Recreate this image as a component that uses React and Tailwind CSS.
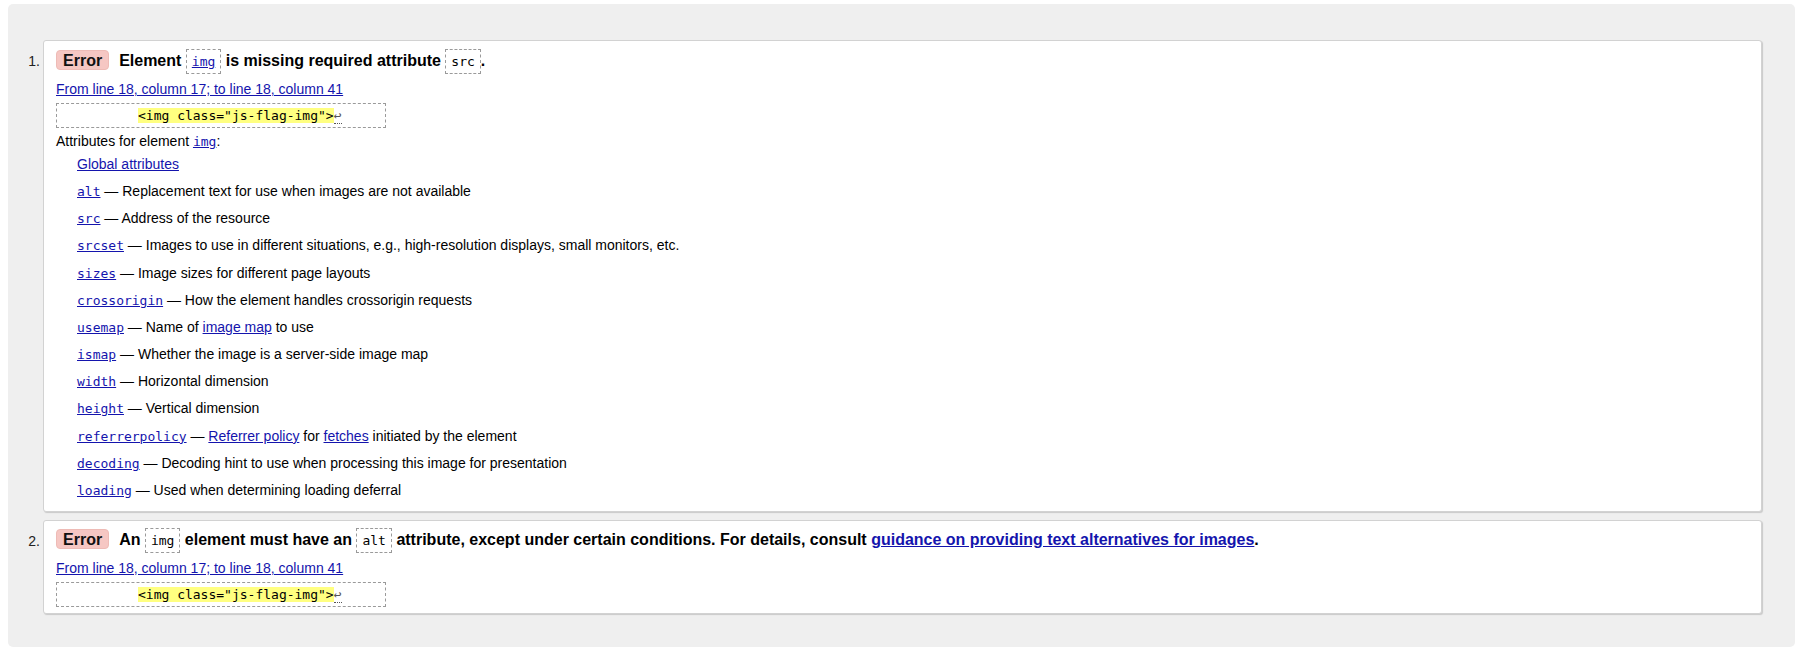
const sans = "font-['Liberation_Sans',Arial,sans-serif]";
const mono = "font-['DejaVu_Sans_Mono',Consolas,monospace] text-[13px]";
const link = "text-[#1414ad] underline";

function Badge() {
  return (
    <span className="inline-block h-[20px] leading-[20px] px-[6px] rounded-[4px] bg-[#f6c7c3] border border-[#eebbb6] text-[#111]">
      Error
    </span>
  );
}

function BoxCode({ children, isLink }) {
  return (
    <code
      className={`${mono} font-normal border border-dashed border-[#9a9a9a] px-[5px] py-[4px] ${
        isLink ? link : "text-black"
      }`}
    >
      {children}
    </code>
  );
}

function Code({ children }) {
  return <code className={`${mono} ${link}`}>{children}</code>;
}

function Extract() {
  return (
    <div
      className={`${mono} mt-[5px] w-[330px] border border-dashed border-[#9a9a9a] leading-[23px] whitespace-pre pl-[81px] text-black`}
    >
      <span className="bg-[#ffff80]">&lt;img class="js-flag-img"&gt;</span>
      <span className="border-b border-dotted border-[#555] text-[#555]">↩</span>
    </div>
  );
}

function Location() {
  return (
    <div className="mt-[7px] leading-[17px]">
      <a className={link} href="#">
        From line 18, column 17; to line 18, column 41
      </a>
    </div>
  );
}

function Num({ n }) {
  return (
    <div className="w-[35px] shrink-0 pt-[9px] pr-[3px] text-right text-[14px] leading-[24px] text-[#222]">
      {n}.
    </div>
  );
}

function Row({ children }) {
  return <div className="leading-[17px]">{children}</div>;
}

export default function App() {
  return (
    <div className={`${sans} text-[14px] text-black bg-white min-h-[656px] pt-[4px] pl-[8px] pr-[7px]`}>
      <div className="bg-[#efefef] rounded-[5px] pt-[36px] pb-[33px] pr-[33px]">
        {/* message 1 */}
        <div className="flex">
          <Num n={1} />
          <div className="flex-1 bg-white border border-[#d2d2d2] rounded-[3px] shadow-[1px_1px_1px_#c9c9c9] pt-[8px] pb-[12px] px-[12px]">
            <div className="text-[16px] font-bold leading-[24px]">
              <Badge />
              <span className="ml-[10px]">Element </span>
              <BoxCode isLink>img</BoxCode> is missing required attribute <BoxCode>src</BoxCode>.
            </div>
            <Location />
            <Extract />
            <div className="mt-[5px] leading-[17px]">
              Attributes for element <Code>img</Code>:
            </div>
            <div className="mt-[6px] pl-[21px] flex flex-col gap-[10.17px]">
              <Row>
                <a className={link} href="#">Global attributes</a>
              </Row>
              <Row>
                <Code>alt</Code> — Replacement text for use when images are not available
              </Row>
              <Row>
                <Code>src</Code> — Address of the resource
              </Row>
              <Row>
                <Code>srcset</Code> — Images to use in different situations, e.g., high-resolution displays, small monitors, etc.
              </Row>
              <Row>
                <Code>sizes</Code> — Image sizes for different page layouts
              </Row>
              <Row>
                <Code>crossorigin</Code> — How the element handles crossorigin requests
              </Row>
              <Row>
                <Code>usemap</Code> — Name of <a className={link} href="#">image map</a> to use
              </Row>
              <Row>
                <Code>ismap</Code> — Whether the image is a server-side image map
              </Row>
              <Row>
                <Code>width</Code> — Horizontal dimension
              </Row>
              <Row>
                <Code>height</Code> — Vertical dimension
              </Row>
              <Row>
                <Code>referrerpolicy</Code> — <a className={link} href="#">Referrer policy</a> for{" "}
                <a className={link} href="#">fetches</a> initiated by the element
              </Row>
              <Row>
                <Code>decoding</Code> — Decoding hint to use when processing this image for presentation
              </Row>
              <Row>
                <Code>loading</Code> — Used when determining loading deferral
              </Row>
            </div>
          </div>
        </div>

        {/* message 2 */}
        <div className="flex mt-[8px]">
          <Num n={2} />
          <div className="flex-1 bg-white border border-[#d2d2d2] rounded-[3px] shadow-[1px_1px_1px_#c9c9c9] pt-[7px] pb-[6px] px-[12px]">
            <div className="text-[16px] font-bold leading-[24px]">
              <Badge />
              <span className="ml-[10px]">An </span>
              <BoxCode>img</BoxCode> element must have an <BoxCode>alt</BoxCode> attribute, except under certain
              conditions. For details, consult{" "}
              <a className={link} href="#">guidance on providing text alternatives for images</a>.
            </div>
            <Location />
            <Extract />
          </div>
        </div>
      </div>
    </div>
  );
}
